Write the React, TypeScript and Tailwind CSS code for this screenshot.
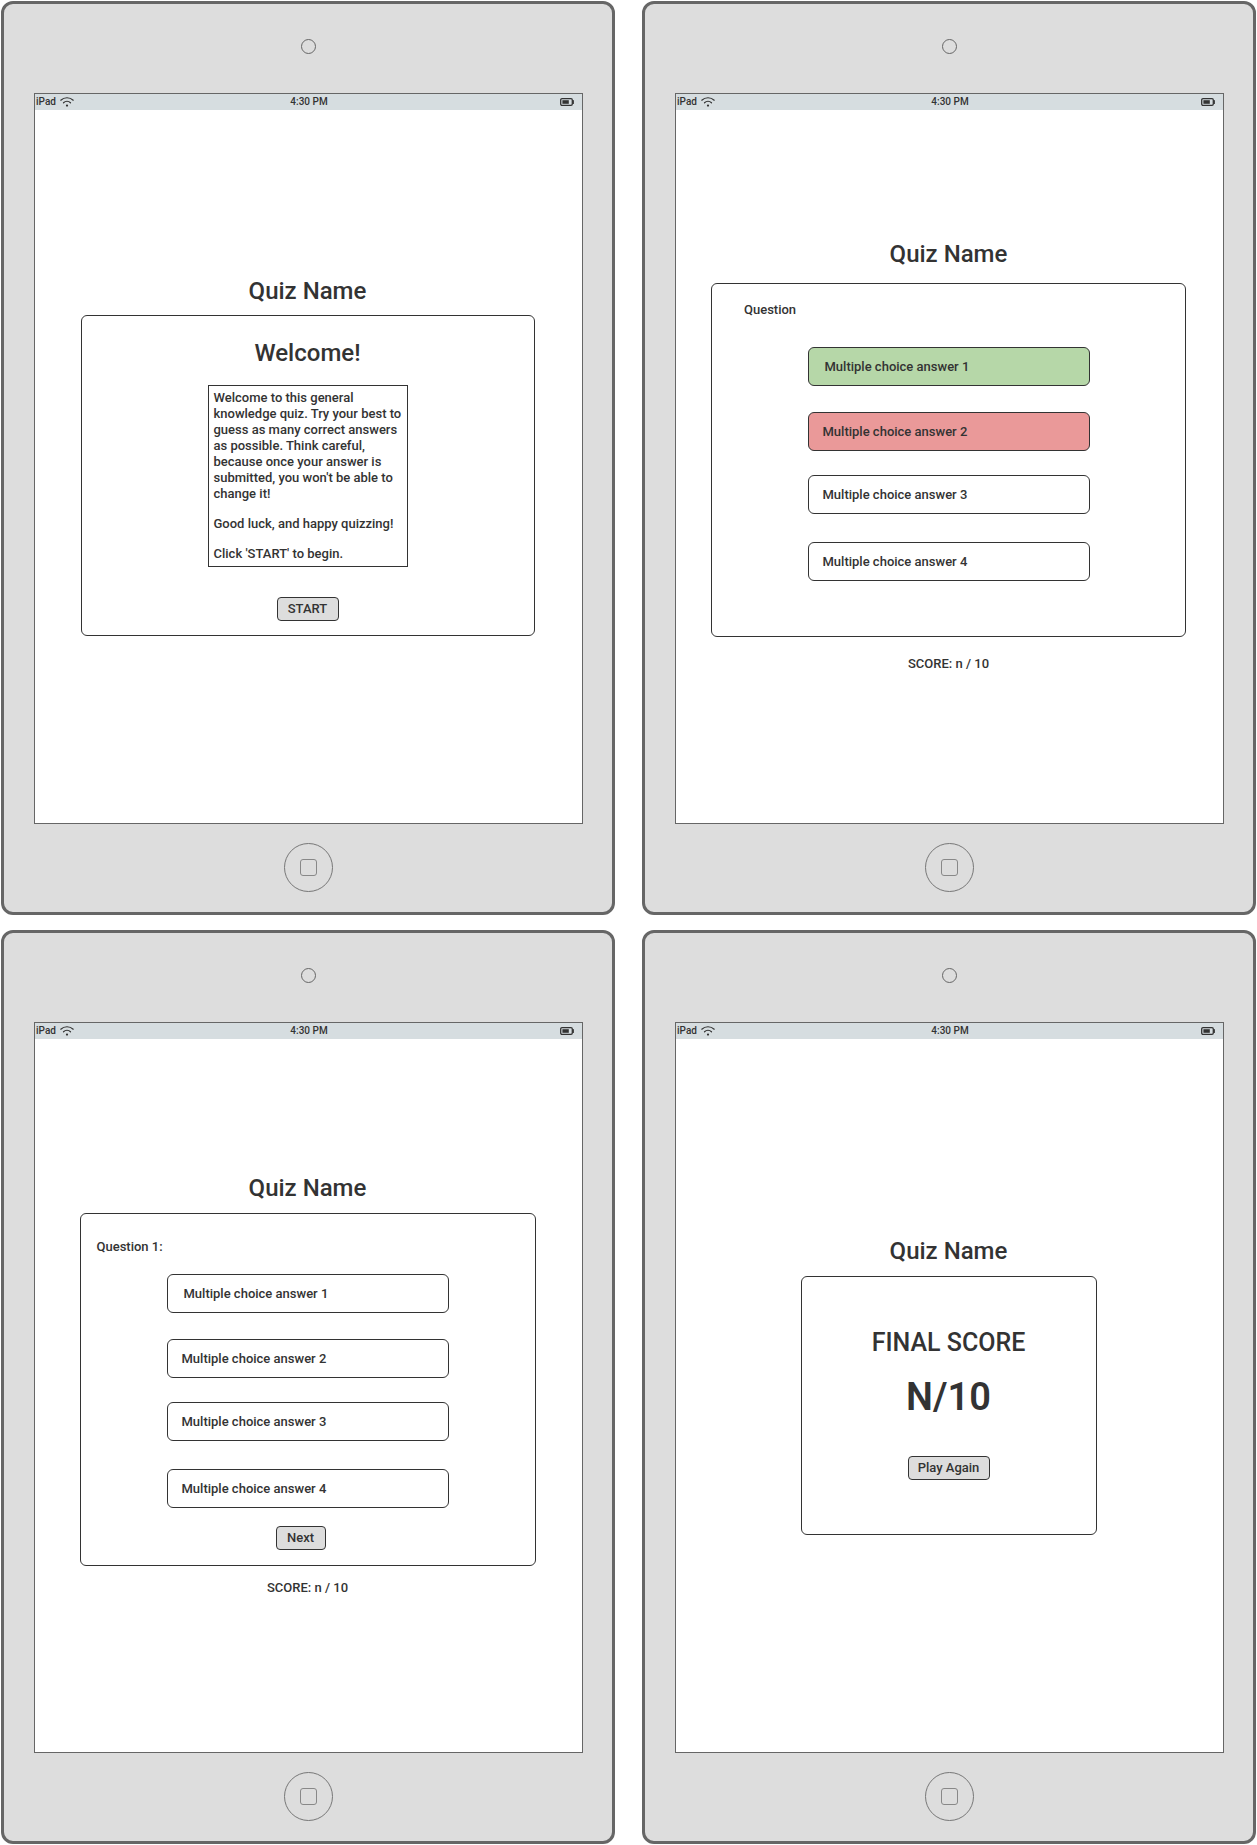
import type { ReactNode } from "react";

function WifiIcon() {
  return (
    <svg className="h-[10px] w-[14px]" viewBox="0 0 14 10" fill="none" stroke="#333333" strokeWidth="1.2" strokeLinecap="round" aria-hidden="true">
      <path d="M0.8 3.2C4.3-0.1 9.7-0.1 13.2 3.2" />
      <path d="M3.5 5.8C5.5 4 8.5 4 10.5 5.8" />
      <circle cx="7" cy="8.6" r="1.1" fill="#333333" stroke="none" />
    </svg>
  );
}

function BatteryIcon() {
  return (
    <svg className="h-2 w-[14px]" viewBox="0 0 14 8" fill="none" aria-hidden="true">
      <rect x="0.7" y="0.7" width="11.6" height="6.6" rx="1.3" stroke="#333333" strokeWidth="1.3" />
      <rect x="2.4" y="2.2" width="6.4" height="3.6" fill="#333333" />
      <path d="M13.3 2.6v2.8" stroke="#333333" strokeWidth="1.2" strokeLinecap="round" />
    </svg>
  );
}

function Tablet({ children }: { children: ReactNode }) {
  return (
    <section className="flex flex-col items-center rounded-xl border-3 border-[#666666] bg-[#dddddd] pt-[35px] pr-[29px] pb-5 pl-[30px]">
      <div className="size-[15px] rounded-full border border-[#666666]" />
      <div className="mt-[39px] flex min-h-[731px] w-full flex-col border border-[#666666] bg-white">
        <header className="grid h-4 grid-cols-3 items-center bg-[#d6dde0] pl-px text-[10px] leading-4">
          <span className="flex items-center gap-1">
            iPad
            <WifiIcon />
          </span>
          <span className="text-center">4:30 PM</span>
          <span className="flex justify-end pr-2">
            <BatteryIcon />
          </span>
        </header>
        <main className="flex flex-1 flex-col items-center pr-0.5">{children}</main>
      </div>
      <button type="button" aria-label="Home" className="mt-[19px] flex size-[49px] items-center justify-center rounded-full border border-[#777777]">
        <span className="size-[17px] rounded-[3px] border border-[#888888]" />
      </button>
    </section>
  );
}

function ActionButton({ className, children }: { className: string; children: ReactNode }) {
  return (
    <button type="button" className={`h-6 rounded border border-[#333333] bg-[#dddddd] text-center ${className}`}>
      {children}
    </button>
  );
}

const answers = [
  { label: "Multiple choice answer 1", margin: "mt-0", padding: "pl-4", result: "bg-[#b6d7a8]" },
  { label: "Multiple choice answer 2", margin: "mt-[26px]", padding: "pl-[14px]", result: "bg-[#ea9999]" },
  { label: "Multiple choice answer 3", margin: "mt-6", padding: "pl-[14px]", result: "bg-white" },
  { label: "Multiple choice answer 4", margin: "mt-7", padding: "pl-[14px]", result: "bg-white" },
];

function AnswerList({ graded = false, className }: { graded?: boolean; className: string }) {
  return (
    <ul className={`w-[282px] max-w-full ${className}`}>
      {answers.map(({ label, margin, padding, result }) => (
        <li key={label} className={margin}>
          <button
            type="button"
            className={`block h-[39px] w-full rounded-md border border-[#333333] text-left ${padding} ${graded ? result : "bg-white"}`}
          >
            {label}
          </button>
        </li>
      ))}
    </ul>
  );
}

const titleClass = "text-2xl leading-8 font-medium";
const cardClass = "flex max-w-full flex-col items-center rounded-md border border-[#333333]";

export default function App() {
  return (
    <div className="grid grid-cols-2 gap-x-[27px] gap-y-[15px] bg-white p-px font-['Roboto',sans-serif] text-[13px] leading-4 font-medium text-[#333333]">
      <Tablet>
        <h1 className={`mt-[165px] ${titleClass}`}>Quiz Name</h1>
        <div className={`mt-2 w-[454px] pt-[21px] pb-[14px] ${cardClass}`}>
          <h2 className={titleClass}>Welcome!</h2>
          <div className="mt-4 flex w-[200px] flex-col gap-[14px] border border-[#333333] py-1 pl-[5px]">
            <p>
              Welcome to this general knowledge quiz. Try your best to guess as many correct answers as possible. Think
              careful, because once your answer is submitted, you won't be able to change it!
            </p>
            <p>Good luck, and happy quizzing!</p>
            <p>Click 'START' to begin.</p>
          </div>
          <ActionButton className="mt-[30px] w-[62px]">START</ActionButton>
        </div>
      </Tablet>

      <Tablet>
        <h1 className={`mt-32 ${titleClass}`}>Quiz Name</h1>
        <div className={`mt-[13px] w-[475px] pt-[18px] pb-[55px] ${cardClass}`}>
          <p className="self-start pl-8">Question</p>
          <AnswerList graded className="mt-[29px]" />
        </div>
        <p className="mt-[19px]">SCORE: n / 10</p>
      </Tablet>

      <Tablet>
        <h1 className={`mt-[133px] ${titleClass}`}>Quiz Name</h1>
        <div className={`mt-[9px] w-[456px] pt-[25px] pb-[15px] ${cardClass}`}>
          <p className="self-start pl-4">Question 1:</p>
          <AnswerList className="mt-[19px]" />
          <ActionButton className="mt-[18px] mr-[14px] w-[50px]">Next</ActionButton>
        </div>
        <p className="mt-[14px]">SCORE: n / 10</p>
      </Tablet>

      <Tablet>
        <h1 className={`mt-[196px] ${titleClass}`}>Quiz Name</h1>
        <div className={`mt-[9px] w-[296px] pt-[50px] pb-[54px] ${cardClass}`}>
          <h2 className="text-[25px] leading-8 font-medium">FINAL SCORE</h2>
          <p className="mt-[18px] text-[38px] leading-10 font-semibold">N/10</p>
          <ActionButton className="mt-[39px] w-[82px]">Play Again</ActionButton>
        </div>
      </Tablet>
    </div>
  );
}
